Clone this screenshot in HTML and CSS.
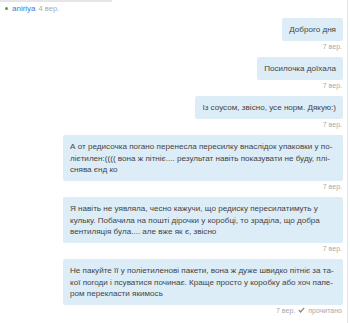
FILE: index.html
```html
<!DOCTYPE html>
<html lang="uk">
  <head>
    <meta charset="UTF-8" />
    <title>Повідомлення</title>
    <meta name="viewport" content="width=device-width, initial-scale=1.0" />
    <link rel="stylesheet" href="styles.css">
  </head>
  <body>
    <div class="chat">
      <div class="chat-topbar"></div>
      <div class="chat-author">
        <span class="chat-dot"></span>
        <a class="chat-name" href="#">aniriya</a>
        <span class="chat-date">4 вер.</span>
      </div>

      <div class="chat-list">
        <div class="msg">
          <div class="msg-bubble">Доброго дня</div>
          <div class="msg-time">7 вер.</div>
        </div>
        <div class="msg">
          <div class="msg-bubble">Посилочка доїхала</div>
          <div class="msg-time">7 вер.</div>
        </div>
        <div class="msg">
          <div class="msg-bubble">Із соусом, звісно, усе норм. Дякую:)</div>
          <div class="msg-time">7 вер.</div>
        </div>
        <div class="msg">
          <div class="msg-bubble">А от редисочка погано перенесла пересилку внаслідок упаковки у по&shy;лієтилен:(((( вона ж пітніє.... результат навіть показувати не буду, плі&shy;снява єнд ко</div>
          <div class="msg-time">7 вер.</div>
        </div>
        <div class="msg">
          <div class="msg-bubble">Я навіть не уявляла, чесно кажучи, що редиску пересилатимуть у кульку. Побачила на пошті дірочки у коробці, то зраділа, що добра вентиляція була.... але вже як є, звісно</div>
          <div class="msg-time">7 вер.</div>
        </div>
        <div class="msg">
          <div class="msg-bubble">Не пакуйте її у поліетиленові пакети, вона ж дуже швидко пітніє за та&shy;кої погоди і псуватися починає. Краще просто у коробку або хоч папе&shy;ром перекласти якимось</div>
          <div class="msg-time">
            7 вер.
            <svg class="msg-check" width="7" height="6" viewBox="0 0 7 6">
              <path d="M0.8 3.2 L2.6 5 L6.2 0.8" fill="none" stroke="#8a8a8a" stroke-width="1.3" />
            </svg>
            прочитано
          </div>
        </div>
      </div>
    </div>
  </body>
</html>
```

FILE: styles.css
```css
body {
  margin: 0;
  background: #fff;
  font-family: "Liberation Sans", Arial, sans-serif;
  color: #444;
}
.chat {
  width: 347px;
  min-height: 323px;
  border-right: 1px solid #e6e6e6;
}
.chat-topbar {
  width: 112px;
  height: 2px;
  background: #e6e6e6;
}
.chat-author {
  display: flex;
  align-items: center;
  gap: 3px;
  height: 13px;
  padding-left: 5px;
  font-size: 8px;
}
.chat-dot {
  width: 3px;
  height: 3px;
  border-radius: 50%;
  background: #2eb82e;
  margin-right: 1px;
}
.chat-name {
  color: #3b7dd8;
  text-decoration: none;
}
.chat-date {
  color: #aaa;
  font-size: 7.5px;
}
.chat-list {
  display: flex;
  flex-direction: column;
  align-items: flex-end;
  padding: 3px 4px 0 0;
}
.msg {
  display: flex;
  flex-direction: column;
  align-items: flex-end;
  max-width: 280px;
}
.msg-bubble {
  background: #dcedf8;
  border-radius: 2px;
  padding: 6px 7px 5.5px 7px;
  font-size: 8.1px;
  line-height: 11.5px;
  hyphens: manual;
}
.msg-time {
  display: flex;
  align-items: center;
  gap: 3px;
  height: 10px;
  margin-bottom: 6px;
  padding-right: 1px;
  font-size: 7px;
  color: #aaa;
}
.msg-check {
  display: block;
}
```
